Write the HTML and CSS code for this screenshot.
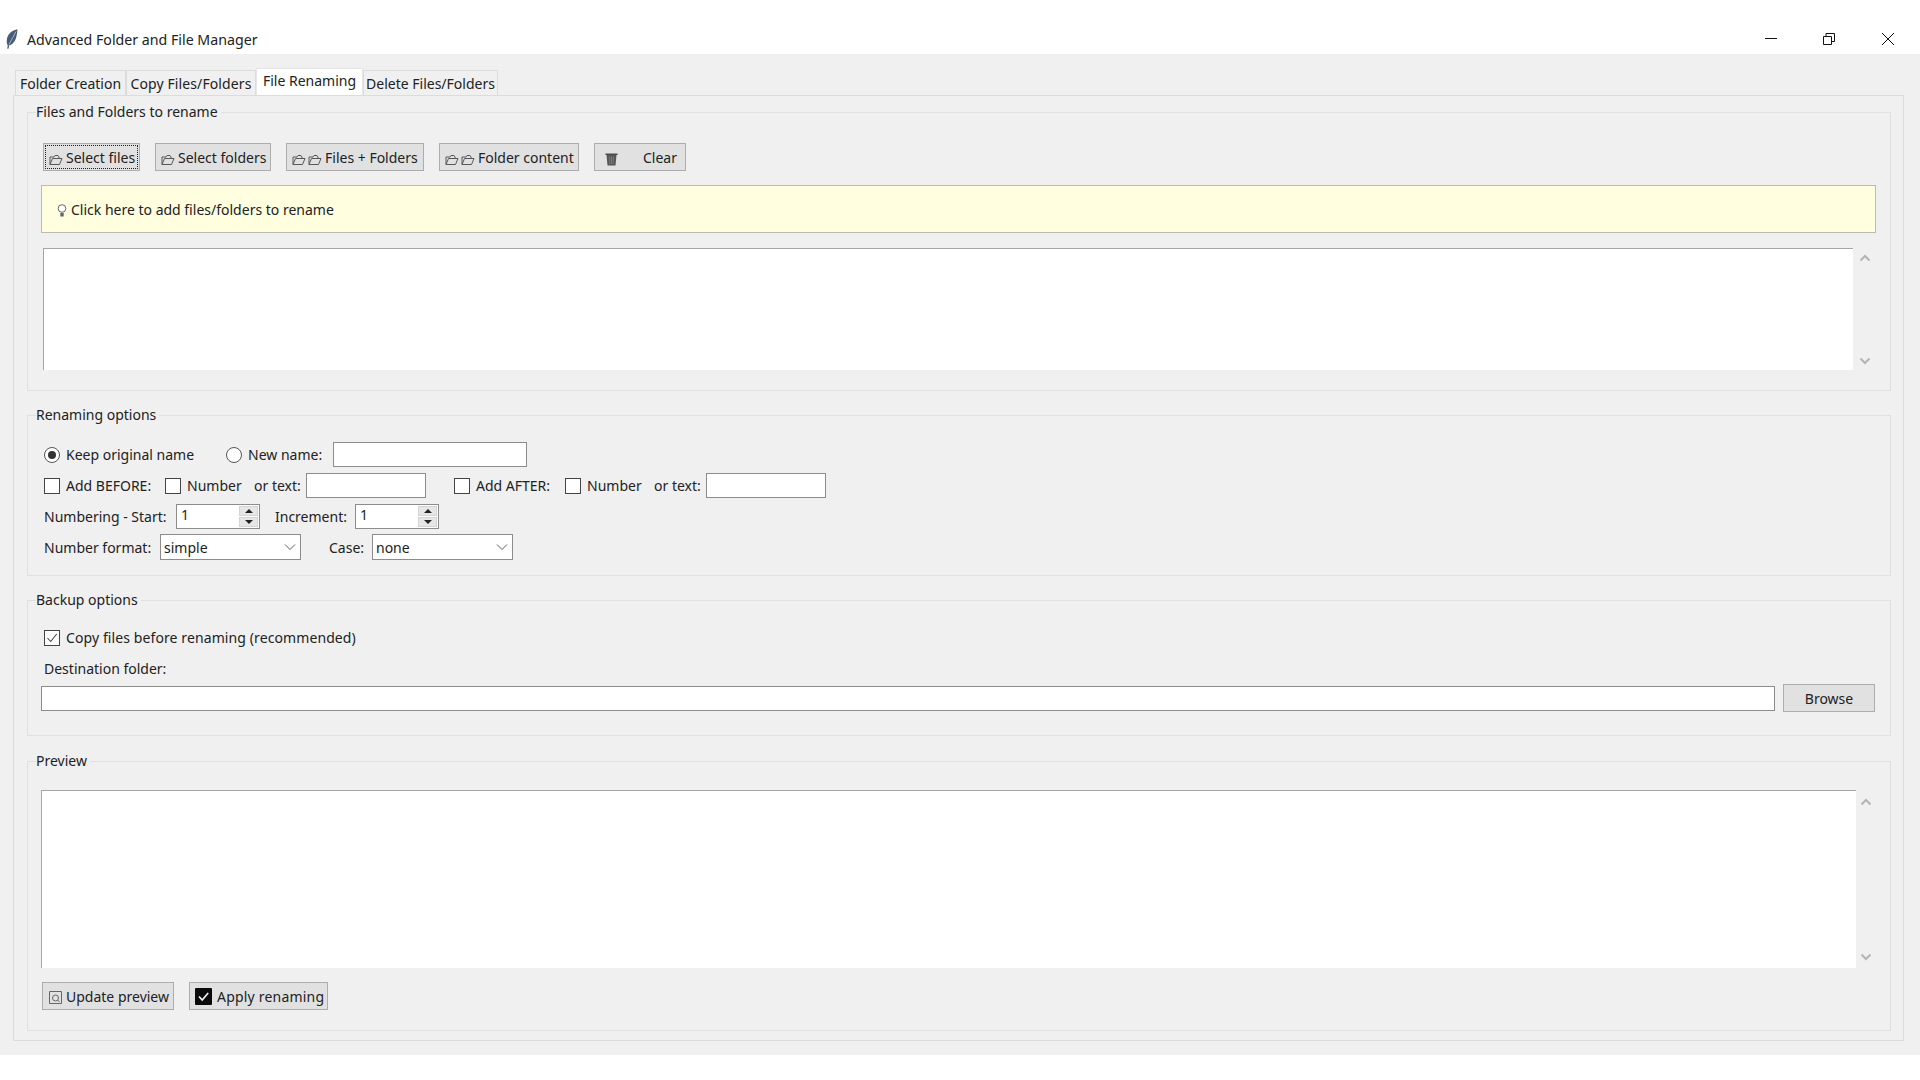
FILE: index.html
```html
<!DOCTYPE html>
<html lang="en">
<head>
<meta charset="utf-8">
<title>Advanced Folder and File Manager</title>
<link rel="stylesheet" href="styles.css">
</head>
<body>
<svg class="defs" width="0" height="0" aria-hidden="true">
  <symbol id="folder" viewBox="0 0 14 12"><path d="M1 10.500V3h4l1-1.500h3L10 3v1.500M1 10.500h9.500l2.500-6H3.500L1 10.500z" fill="none" stroke="#55585c" stroke-width="1"/></symbol>
  <symbol id="up" viewBox="0 0 12 8"><path d="M1.500 6.500 6 2l4.500 4.500" fill="none" stroke="#b4b4b4" stroke-width="2"/></symbol>
  <symbol id="down" viewBox="0 0 12 8"><path d="M1.500 1.500 6 6l4.500-4.500" fill="none" stroke="#b4b4b4" stroke-width="2"/></symbol>
  <symbol id="chev" viewBox="0 0 12 8"><path d="M1 1.500 6 6.500l5-5" fill="none" stroke="#5c5c5c" stroke-width="1"/></symbol>
</svg>

<header class="titlebar">
  <svg class="feather" width="12" height="20" viewBox="0 0 12 20"><path d="M11.500.3C6.500 1 1.500 5 .8 11c-.3 2.500.2 4 .9 5.200L1.300 19.700h1.200l.7-3.500c3.500-.6 6.300-4.300 7.300-9 .5-2.400 1-4.700 1-6.900z" fill="#465c78"/><path d="M10 2.500 3 15.500" stroke="#bcc8d4" stroke-width=".8"/></svg>
  <span class="title">Advanced Folder and File Manager</span>
  <div class="winctl">
    <svg width="12" height="12" viewBox="0 0 12 12"><path d="M0 5.500h12" stroke="#111" fill="none"/></svg>
    <svg width="12" height="12" viewBox="0 0 12 12"><path d="M.5 3.500h8v8h-8zM3 3.500V.5h8.500v8H8.500" stroke="#111" fill="none"/></svg>
    <svg class="close" width="12" height="12" viewBox="0 0 12 12"><path d="M0 0l12 12M12 0 0 12" stroke="#111" fill="none"/></svg>
  </div>
</header>

<main class="app">
  <nav class="tabs">
    <div class="tab t1">Folder Creation</div>
    <div class="tab t2">Copy Files/Folders</div>
    <div class="tab t3 active">File Renaming</div>
    <div class="tab t4">Delete Files/Folders</div>
  </nav>

  <div class="pane">
    <section class="group g-files">
      <div class="legend">Files and Folders to rename</div>
      <div class="btnrow">
        <div class="btn focus b1"><svg class="ico"><use href="#folder"/></svg><span>Select files</span></div>
        <div class="btn b2"><svg class="ico"><use href="#folder"/></svg><span>Select folders</span></div>
        <div class="btn b3"><svg class="ico"><use href="#folder"/></svg><svg class="ico ico2"><use href="#folder"/></svg><span>Files + Folders</span></div>
        <div class="btn b4"><svg class="ico"><use href="#folder"/></svg><svg class="ico ico2"><use href="#folder"/></svg><span>Folder content</span></div>
        <div class="btn b5">
          <svg class="trash" width="13" height="14" viewBox="0 0 13 14"><path d="M.5 1.500h12v1.500h-12z" fill="#4a4a4a"/><path d="M1.500 3h10l-1 10.500h-8z" fill="#55565a"/><path d="M4.500 4.500l.4 7.500M8.500 4.500l-.4 7.500M6.500 4.500v7.500" stroke="#8a8a8a" stroke-width=".7"/></svg>
          <span class="clear">Clear</span>
        </div>
      </div>
      <div class="hint">
        <svg class="bulb" width="10" height="14" viewBox="0 0 10 14"><circle cx="5" cy="4.500" r="3.800" fill="#fff" stroke="#555" stroke-width=".9"/><path d="M3.300 9h3.400v3.500H3.300z" fill="#666"/></svg>
        <span>Click here to add files/folders to rename</span>
      </div>
      <div class="listrow list-files">
        <div class="listbox"></div>
        <div class="scroll"><svg class="sc" width="12" height="8"><use href="#up"/></svg><svg class="sc" width="12" height="8"><use href="#down"/></svg></div>
      </div>
    </section>

    <section class="group g-opts">
      <div class="legend">Renaming options</div>
      <div class="row">
        <span class="radio on"></span><span class="lbl w-keep">Keep original name</span>
        <span class="radio r2"></span><span class="lbl">New name:</span>
        <div class="entry e-new"></div>
      </div>
      <div class="row">
        <span class="check"></span><span class="lbl w-add">Add BEFORE:</span>
        <span class="check c2"></span><span class="lbl w-num">Number</span>
        <span class="lbl w-or">or text:</span>
        <div class="entry e-text"></div>
        <span class="check c3"></span><span class="lbl w-add2">Add AFTER:</span>
        <span class="check c2"></span><span class="lbl w-num">Number</span>
        <span class="lbl w-or">or text:</span>
        <div class="entry e-text"></div>
      </div>
      <div class="row">
        <span class="lbl w-start">Numbering - Start:</span>
        <div class="spin"><span class="val">1</span><div class="arrows"><i class="ar up"></i><i class="ar dn"></i></div></div>
        <span class="lbl w-inc">Increment:</span>
        <div class="spin"><span class="val">1</span><div class="arrows"><i class="ar up"></i><i class="ar dn"></i></div></div>
      </div>
      <div class="row row-last">
        <span class="lbl w-fmt">Number format:</span>
        <div class="combo"><span>simple</span><svg width="12" height="8"><use href="#chev"/></svg></div>
        <span class="lbl w-case">Case:</span>
        <div class="combo"><span>none</span><svg width="12" height="8"><use href="#chev"/></svg></div>
      </div>
    </section>

    <section class="group g-backup">
      <div class="legend">Backup options</div>
      <div class="row row-check">
        <span class="check checked"><svg width="14" height="14" viewBox="0 0 14 14"><path d="M2.500 7l3.200 3.500 6-7.500" fill="none" stroke="#444" stroke-width="1.100"/></svg></span>
        <span class="lbl wide">Copy files before renaming (recommended)</span>
      </div>
      <div class="row row-dest"><span class="lbl">Destination folder:</span></div>
      <div class="pathrow">
        <div class="entry e-path"></div>
        <div class="btn browse"><span>Browse</span></div>
      </div>
    </section>

    <section class="group g-preview">
      <div class="legend">Preview</div>
      <div class="listrow list-prev">
        <div class="listbox lb2"></div>
        <div class="scroll sc2"><svg class="sc" width="12" height="8"><use href="#up"/></svg><svg class="sc" width="12" height="8"><use href="#down"/></svg></div>
      </div>
      <div class="btnrow btm">
        <div class="btn b6">
          <svg class="prev" width="13" height="13" viewBox="0 0 13 13"><path d="M.5.500h12v12H.5z" fill="none" stroke="#666"/><circle cx="6.500" cy="7" r="3" fill="none" stroke="#666"/><path d="M8.500 9l2 2" stroke="#666"/></svg>
          <span>Update preview</span>
        </div>
        <div class="btn b7">
          <svg class="ok" width="17" height="17" viewBox="0 0 17 17"><rect width="17" height="17" rx="1" fill="#0a0a0a"/><path d="M4 8.500l3.200 3.500 6-7" fill="none" stroke="#f2f2f2" stroke-width="1.700"/></svg>
          <span class="apply">Apply renaming</span>
        </div>
      </div>
    </section>
  </div>
</main>
</body>
</html>
```

FILE: styles.css
```css
* { box-sizing: border-box; }
html, body { margin: 0; padding: 0; background: #fff; }
body { font-family: "Noto Sans", "Open Sans", sans-serif; font-size: 14px; color: #222; height: 1080px; overflow: hidden; }
.defs { position: absolute; }

.titlebar { height: 54px; background: #fff; display: flex; align-items: center; padding: 24px 26px 0 6px; }
.feather { flex: none; }
.title { margin-left: 9px; font-size: 14.2px; color: #222; }
.winctl { margin-left: auto; display: flex; gap: 46px; }
.close { margin-left: 1px; }

.app { height: 1001px; background: #f0f0f0; padding: 14px 16px 0 13px; }
.tabs { display: flex; height: 27px; padding-left: 2px; align-items: flex-end; }
.tab { height: 25px; background: #f0f0f0; border: 1px solid #dcdcdc; border-bottom: 0; display: flex; align-items: center; justify-content: center; white-space: nowrap; }
.t1 { width: 111px; }
.t2 { width: 130px; letter-spacing: .1px; }
.t3 { width: 107px; height: 27px; background: #fff; padding-bottom: 3px; border-color: #e6e6e6; }
.t4 { width: 135px; }

.pane { height: 946px; border: 1px solid #dcdcdc; padding: 16px 12px 0 13px; }

.group { border: 1px solid #e0e0e0; padding: 0 13px; }
.legend { width: max-content; height: 20px; line-height: 18px; margin: -10px 0 0 -5px; padding: 0 3px 0 0; background: #f0f0f0; }

.g-files { height: 279px; }
.g-opts { height: 161px; margin-top: 24px; padding-left: 16px; }
.g-backup { height: 136px; margin-top: 24px; }
.g-preview { height: 270px; margin-top: 25px; }
.g-opts .legend { margin-left: -8px; }

.btnrow { display: flex; gap: 15px; margin: 20px 0 0 2px; }
.btn { height: 28px; background: #e1e1e1; border: 1px solid #adadad; display: flex; align-items: center; white-space: nowrap; padding-left: 5px; flex: none; }
.focus { outline: 1px dotted #222; outline-offset: -3px; }
.b1 { width: 97px; }
.b2 { width: 116px; }
.b3 { width: 138px; }
.b4 { width: 140px; }
.b5 { width: 92px; }
.ico { width: 14px; height: 12px; margin: 6px 3px 0 0; flex: none; }
.ico2 { margin-left: -1px; }
.trash { margin: 3px 0 0 5px; }
.clear { margin-left: 25px; }

.hint { height: 48px; margin-top: 14px; width: 1835px; background: #ffffe0; border: 1px solid #bcbcae; display: flex; align-items: center; padding-left: 15px; }
.bulb { margin: 3px 4px 0 0; flex: none; }

.listrow { display: flex; }
.list-files { margin: 15px 0 0 2px; height: 122px; }
.listbox { width: 1810px; background: #fff; border-top: 1px solid #a6a6a6; border-left: 1px solid #a6a6a6; }
.scroll { width: 24px; display: flex; flex-direction: column; justify-content: space-between; align-items: center; padding: 6px 0 5px 0; }
.sc { display: block; }

.row { display: flex; align-items: center; height: 25px; margin-top: 6px; white-space: nowrap; }
.legend + .row { margin-top: 16px; }
.row-last { height: 26px; margin-top: 5px; }
.lbl { flex: none; }

.radio { width: 16px; height: 16px; border: 1px solid #555; border-radius: 50%; background: #fff; flex: none; position: relative; display: block; margin-right: 6px; }
.radio.on::after { content: ""; position: absolute; left: 3px; top: 3px; width: 8px; height: 8px; border-radius: 50%; background: #333; }
.w-keep { width: 160px; }

.check { width: 16px; height: 16px; border: 1px solid #444; background: #fff; flex: none; display: flex; align-items: center; justify-content: center; margin-right: 6px; }
.c3 { margin-left: 28px; }
.w-add { width: 99px; }
.w-add2 { width: 89px; }
.w-num { width: 67px; }
.w-or { width: 52px; }

.entry { background: #fff; border: 1px solid #8c8c8c; flex: none; height: 25px; }
.e-new { width: 194px; margin-left: 11px; }
.e-text { width: 120px; }

.w-start { width: 132px; }
.w-inc { width: 80px; margin-left: 15px; }
.spin { width: 84px; height: 25px; background: #fff; border: 1px solid #8c8c8c; flex: none; display: flex; justify-content: space-between; padding: 0 1px 0 4px; }
.val { line-height: 20px; }
.arrows { width: 19px; display: flex; flex-direction: column; gap: 1px; padding-top: 1px; }
.ar { display: flex; align-items: center; justify-content: center; height: 10px; background: #e6e6e6; border: 1px solid #d4d4d4; }
.ar::after { content: ""; border-left: 4px solid transparent; border-right: 4px solid transparent; }
.up::after { border-bottom: 4px solid #222; }
.dn::after { border-top: 4px solid #222; }

.w-fmt { width: 116px; }
.w-case { width: 43px; margin-left: 28px; }
.combo { width: 141px; height: 26px; background: #fff; border: 1px solid #8c8c8c; flex: none; display: flex; align-items: center; justify-content: space-between; padding: 0 4px 0 3px; }

.g-backup .row { margin-left: 3px; }
.g-backup .row-check { margin-top: 14px; }
.wide { letter-spacing: .1px; }
.pathrow { display: flex; align-items: center; gap: 8px; margin-top: 3px; height: 28px; }
.e-path { width: 1734px; }
.browse { width: 92px; justify-content: center; padding: 0; }

.list-prev { margin-top: 18px; height: 178px; }
.lb2 { width: 1815px; }
.sc2 { width: 20px; padding: 8px 0 7px 0; }
.btm { margin: 14px 0 0 1px; }
.b6 { width: 132px; }
.b7 { width: 139px; }
.prev { margin: 3px 4px 0 1px; flex: none; }
.ok { margin-right: 5px; flex: none; }
.apply { letter-spacing: .2px; }
```
